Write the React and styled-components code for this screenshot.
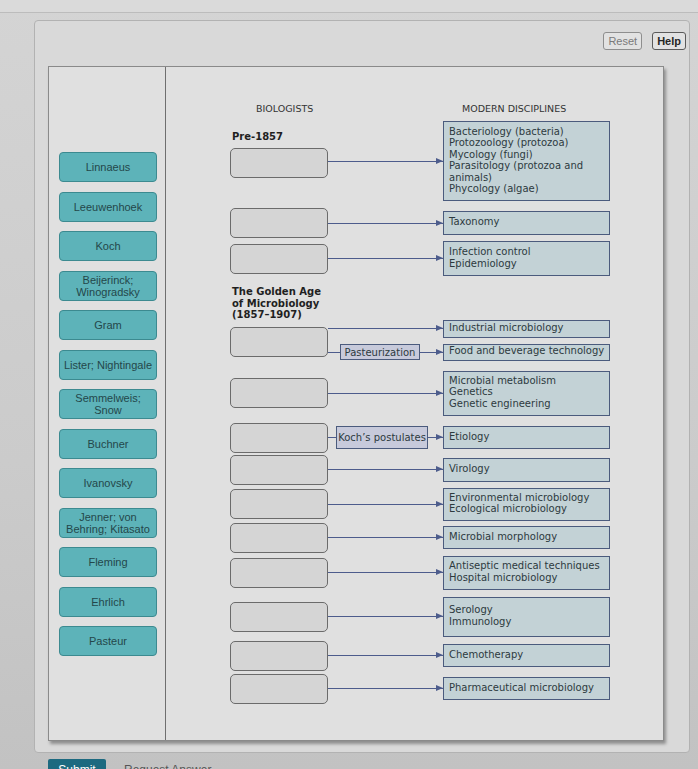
import styled, { createGlobalStyle } from 'styled-components';

const GlobalStyle = createGlobalStyle`
  html, body {
    margin: 0;
    padding: 0;
  }
  body {
    width: 698px;
    height: 769px;
    overflow: hidden;
    background: linear-gradient(180deg, #d4d4d4 0%, #cbcbcb 60%, #c2c2c2 100%);
    font-family: "DejaVu Sans", Verdana, sans-serif;
  }
`;

const biologists = [
  'Linnaeus',
  'Leeuwenhoek',
  'Koch',
  'Beijerinck;\nWinogradsky',
  'Gram',
  'Lister; Nightingale',
  'Semmelweis;\nSnow',
  'Buchner',
  'Ivanovsky',
  'Jenner; von\nBehring; Kitasato',
  'Fleming',
  'Ehrlich',
  'Pasteur',
];

const lines = (text) => (
  <TextBlock>
    {text.split('\n').map((t, i) => (
      <span key={i}>
        {i > 0 && <br />}
        {t}
      </span>
    ))}
  </TextBlock>
);

const App = () => {
  return (
    <Page>
      <GlobalStyle />
      <TopStrip />
      <Panel>
        <Toolbar>
          <ToolButton>Reset</ToolButton>
          <ToolButton $active>Help</ToolButton>
        </Toolbar>

        <Board>
          <Bank>
            {biologists.map((name) => (
              <Chip key={name}>{lines(name)}</Chip>
            ))}
          </Bank>

          <Workspace>
            <ColumnHeads>
              <Head $pad={26}>BIOLOGISTS</Head>
              <span />
              <Head $pad={19}>MODERN DISCIPLINES</Head>
            </ColumnHeads>

            <Row $top={6}>
              <SlotStack>
                <EraLabel>Pre-1857</EraLabel>
                <Slot />
              </SlotStack>
              <Connector $w={115} $arrow />
              <Target $h={80}>
                {lines('Bacteriology (bacteria)\nProtozoology (protozoa)\nMycology (fungi)\nParasitology (protozoa and\nanimals)\nPhycology (algae)')}
              </Target>
            </Row>

            <Row $top={7}>
              <Slot />
              <Connector $w={115} $arrow />
              <Target $h={24}>Taxonomy</Target>
            </Row>

            <Row $top={3}>
              <Slot />
              <Connector $w={115} $arrow />
              <Target $h={35}>{lines('Infection control\nEpidemiology')}</Target>
            </Row>

            <EraLabel $top={10}>
              {lines('The Golden Age\nof Microbiology\n(1857–1907)')}
            </EraLabel>

            <Row $top={-1}>
              <Slot $shift={4} />
              <Branches>
                <Branch>
                  <Connector $w={115} $arrow />
                  <Target $h={18}>Industrial microbiology</Target>
                </Branch>
                <Branch>
                  <Connector $w={12} />
                  <Process $w={80} $h={16}>Pasteurization</Process>
                  <Connector $w={23} $arrow />
                  <Target $h={17}>Food and beverage technology</Target>
                </Branch>
              </Branches>
            </Row>

            <Row $top={10}>
              <Slot />
              <Connector $w={115} $arrow />
              <Target $h={45}>
                {lines('Microbial metabolism\nGenetics\nGenetic engineering')}
              </Target>
            </Row>

            <Row $top={7}>
              <Slot />
              <Connector $w={8} />
              <Process $w={92} $h={23}>Koch’s postulates</Process>
              <Connector $w={15} $arrow />
              <Target $h={23}>Etiology</Target>
            </Row>

            <Row $top={2}>
              <Slot />
              <Connector $w={115} $arrow />
              <Target $h={24}>Virology</Target>
            </Row>

            <Row $top={3}>
              <Slot />
              <Connector $w={115} $arrow />
              <Target $h={33}>
                {lines('Environmental microbiology\nEcological microbiology')}
              </Target>
            </Row>

            <Row $top={2}>
              <Slot />
              <Connector $w={115} $arrow />
              <Target $h={23}>Microbial morphology</Target>
            </Row>

            <Row $top={3}>
              <Slot />
              <Connector $w={115} $arrow />
              <Target $h={34}>
                {lines('Antiseptic medical techniques\nHospital microbiology')}
              </Target>
            </Row>

            <Row $top={7}>
              <Slot />
              <Connector $w={115} $arrow />
              <Target $h={40}>{lines('Serology\nImmunology')}</Target>
            </Row>

            <Row $top={4}>
              <Slot />
              <Connector $w={115} $arrow />
              <Target $h={23}>Chemotherapy</Target>
            </Row>

            <Row $top={3}>
              <Slot />
              <Connector $w={115} $arrow />
              <Target $h={23}>Pharmaceutical microbiology</Target>
            </Row>
          </Workspace>
        </Board>
      </Panel>

      <Footer>
        <SubmitButton>Submit</SubmitButton>
        <RequestLink>Request Answer</RequestLink>
      </Footer>
    </Page>
  );
};

const Page = styled.div`
  width: 698px;
  height: 769px;
  overflow: hidden;
`;

const TopStrip = styled.div`
  height: 12px;
  background: #dadada;
  border-bottom: 1px solid #bcbcbc;
`;

const Panel = styled.div`
  margin: 7px 8px 0 34px;
  padding: 11px 3px 11px 13px;
  background: #d9d9d9;
  border: 1px solid #b2b2b2;
  border-radius: 4px;
`;

const Toolbar = styled.div`
  display: flex;
  justify-content: flex-end;
  gap: 10px;
  height: 18px;
  margin-bottom: 16px;
`;

const ToolButton = styled.button`
  height: 18px;
  padding: 0 4px;
  background: #e2e2e2;
  border: 1px solid ${(p) => (p.$active ? '#5a5a5a' : '#8e8e8e')};
  border-radius: 3px;
  color: ${(p) => (p.$active ? '#262626' : '#7a7a7a')};
  font-family: "Liberation Sans", Arial, sans-serif;
  font-size: 11px;
  font-weight: ${(p) => (p.$active ? 700 : 400)};
  line-height: 16px;
`;

const Board = styled.div`
  display: flex;
  margin-right: 22px;
  background: #e0e0e0;
  border: 1px solid #8a8a8a;
  box-shadow: 2px 3px 3px rgba(0, 0, 0, 0.35);
`;

const Bank = styled.div`
  width: 117px;
  flex-shrink: 0;
  display: flex;
  flex-direction: column;
  gap: 9.5px;
  padding: 85px 0 0 10px;
  box-sizing: border-box;
  border-right: 1px solid #6f6f6f;
`;

const TextBlock = styled.div`
  display: block;
`;

const Chip = styled.div`
  width: 98px;
  height: 30px;
  box-sizing: border-box;
  display: flex;
  align-items: center;
  justify-content: center;
  text-align: center;
  background: #5db3b9;
  border: 1px solid #3c8a90;
  border-radius: 4px;
  color: #24474a;
  font-family: "Liberation Sans", Arial, sans-serif;
  font-size: 11px;
  line-height: 12px;
  white-space: nowrap;
`;

const Workspace = styled.div`
  flex: 1;
  padding: 36px 0 36px 64px;
`;

const ColumnHeads = styled.div`
  display: grid;
  grid-template-columns: 98px 115px 167px;
  height: 12px;
  line-height: 12px;
`;

const Head = styled.span`
  padding-left: ${(p) => p.$pad}px;
  white-space: nowrap;
  color: #333;
  font-size: 9.5px;
`;

const Row = styled.div`
  display: flex;
  align-items: center;
  margin-top: ${(p) => p.$top}px;
`;

const SlotStack = styled.div`
  display: flex;
  flex-direction: column;
  gap: 5px;
  padding-bottom: 13px;
`;

const EraLabel = styled.div`
  margin-top: ${(p) => p.$top || 0}px;
  padding-left: 2px;
  color: #1f1f1f;
  font-size: 10px;
  font-weight: 700;
  line-height: 11.5px;
`;

const Slot = styled.div`
  width: 98px;
  height: 30px;
  flex-shrink: 0;
  box-sizing: border-box;
  margin-top: ${(p) => p.$shift || 0}px;
  background: #d5d5d5;
  border: 1px solid #6b6b6b;
  border-radius: 5px;
`;

const Connector = styled.div`
  position: relative;
  width: ${(p) => p.$w}px;
  height: 1px;
  flex-shrink: 0;
  background: #4d5c8c;

  ${(p) =>
    p.$arrow &&
    `
    &::after {
      content: '';
      position: absolute;
      right: 0;
      top: -3px;
      border-left: 7px solid #4d5c8c;
      border-top: 3.5px solid transparent;
      border-bottom: 3.5px solid transparent;
    }
  `}
`;

const Branches = styled.div`
  display: flex;
  flex-direction: column;
  gap: 6px;
`;

const Branch = styled.div`
  display: flex;
  align-items: center;
`;

const Target = styled.div`
  width: 167px;
  height: ${(p) => p.$h}px;
  flex-shrink: 0;
  box-sizing: border-box;
  display: flex;
  flex-direction: column;
  justify-content: center;
  padding: 0 4px 2px 5px;
  background: #c3d2d6;
  border: 1px solid #4b5b7d;
  color: #2d3a3e;
  font-size: 10px;
  line-height: 11.5px;
  white-space: nowrap;
`;

const Process = styled.div`
  width: ${(p) => p.$w}px;
  height: ${(p) => p.$h}px;
  flex-shrink: 0;
  box-sizing: border-box;
  display: flex;
  align-items: center;
  justify-content: center;
  background: #c7cadb;
  border: 1px solid #4b5b7d;
  color: #2d3a3e;
  font-size: 10px;
  white-space: nowrap;
`;

const Footer = styled.div`
  display: flex;
  align-items: flex-start;
  gap: 18px;
  margin: 6px 0 0 48px;
`;

const SubmitButton = styled.button`
  width: 58px;
  height: 22px;
  padding: 0;
  background: #1d6a80;
  border: none;
  border-radius: 2px;
  color: #fff;
  font-family: "Liberation Sans", Arial, sans-serif;
  font-size: 12px;
`;

const RequestLink = styled.span`
  padding-top: 4px;
  color: #555;
  font-family: "Liberation Sans", Arial, sans-serif;
  font-size: 12px;
`;

export default App;
